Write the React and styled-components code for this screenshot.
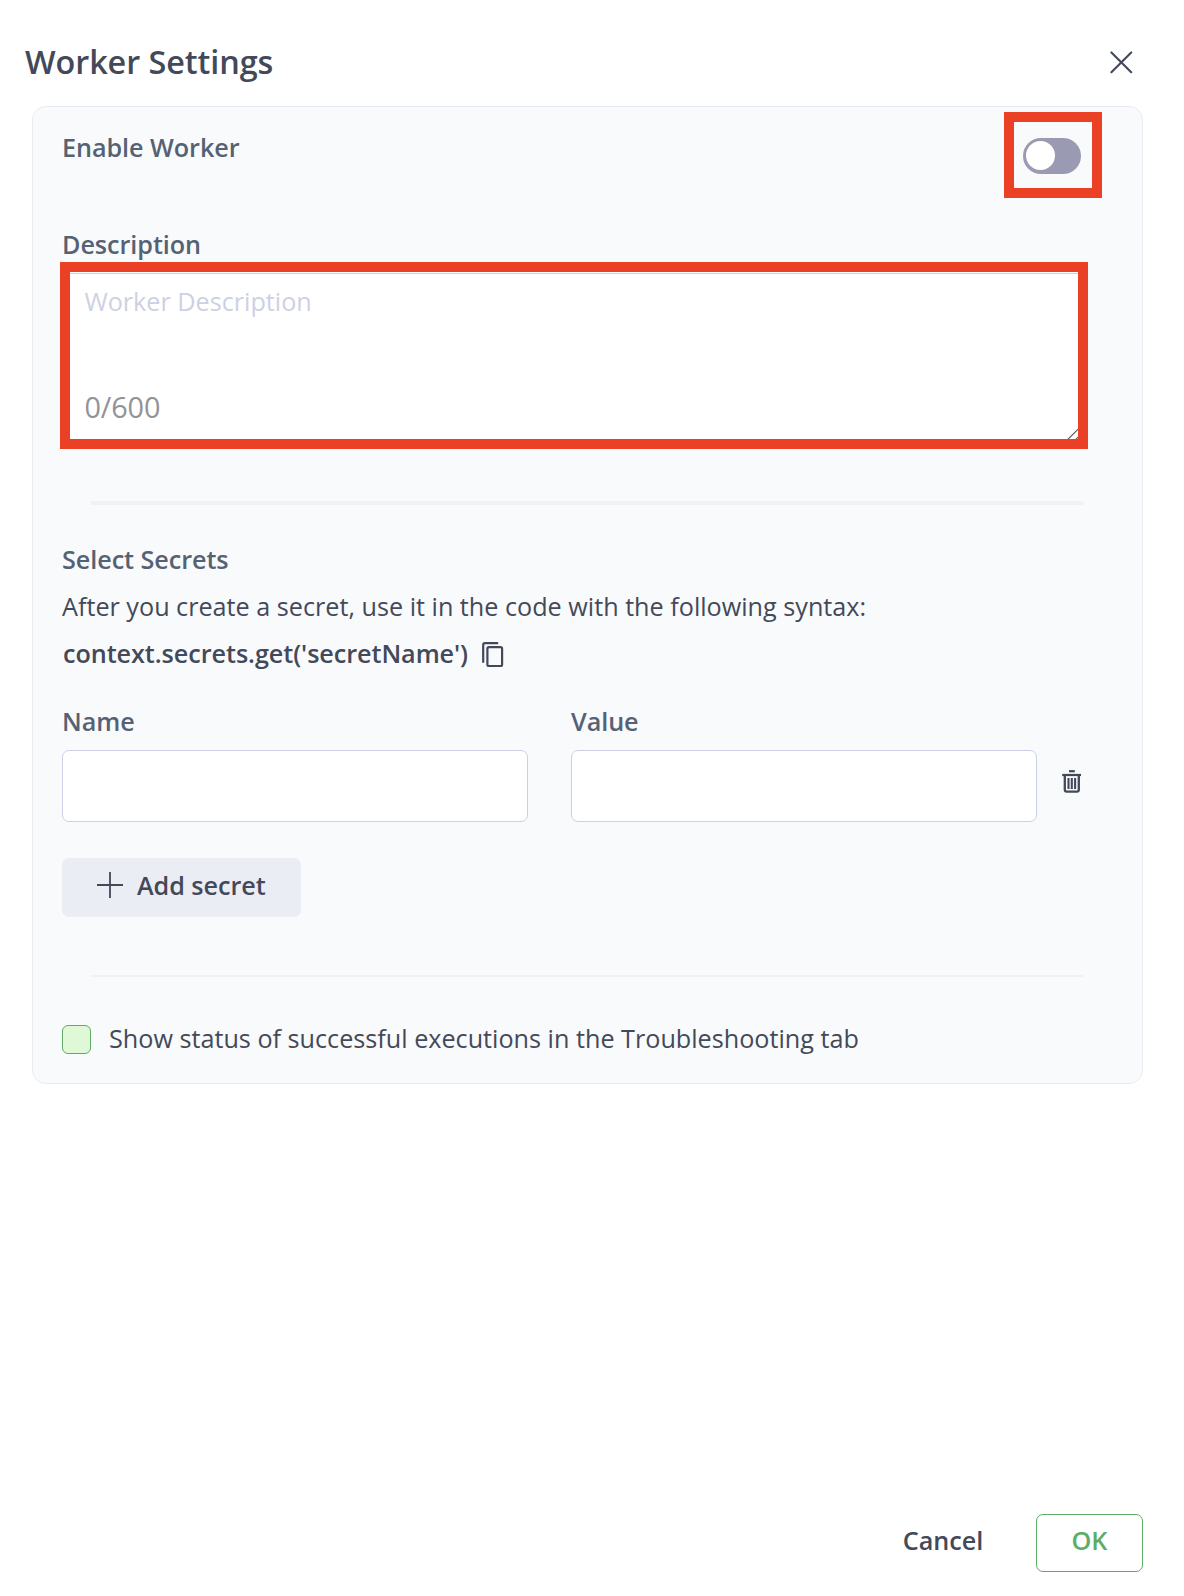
import React from "react";
import styled, { createGlobalStyle } from "styled-components";

const ink = "#434959";
const slate = "#556273";
const accent = "#ea4025";
const green = "#5bad68";

const GlobalStyle = createGlobalStyle`
  * { box-sizing: border-box; }
  body { margin: 0; background: #fff; font-family: "Open Sans", "Noto Sans", sans-serif; }
`;

const Page = styled.main`
  width: 1184px;
  height: 1596px;
  display: flex;
  flex-direction: column;
  background: #fff;
  color: ${ink};
`;

const Header = styled.header`
  height: 106px;
  padding: 39px 51px 0 25px;
  display: flex;
  justify-content: space-between;
  align-items: flex-start;
`;

const Title = styled.h1`
  margin: 0;
  font-size: 32.4px;
  line-height: 44px;
  font-weight: 600;
  letter-spacing: -0.08px;
`;

const IconButton = styled.button`
  display: flex;
  padding: 0;
  border: 0;
  background: none;
  color: ${ink};
  margin-top: ${(p) => p.$top || 0}px;
  margin-left: ${(p) => p.$left || 0}px;
`;

const Card = styled.section`
  height: 978px;
  margin: 0 41px 0 32px;
  padding: 5px 40px 0 29px;
  border: 1px solid #e9ebf3;
  border-radius: 14px;
  background: #f9fafc;
  display: flex;
  flex-direction: column;
  align-items: stretch;
`;

const Text = styled.div`
  font-size: 25.2px;
  line-height: 36px;
  white-space: nowrap;
  font-weight: ${(p) => (p.$strong ? 600 : 400)};
  letter-spacing: ${(p) => (p.$strong ? "-0.06px" : "normal")};
  color: ${(p) => p.$color || ink};
  margin-top: ${(p) => p.$top || 0}px;
`;

const EnableRow = styled.div`
  display: flex;
  justify-content: space-between;
`;

const ToggleFrame = styled.div`
  width: 98px;
  height: 86px;
  border: 10px solid ${accent};
  padding: 16px 0 0 9px;
`;

const Toggle = styled.div`
  width: 58px;
  height: 36px;
  padding: 3px;
  border-radius: 18px;
  background: #9a9bb2;
`;

const Knob = styled.div`
  width: 29px;
  height: 29px;
  border-radius: 50%;
  background: #fff;
`;

const DescriptionFrame = styled.div`
  width: 1028px;
  height: 187px;
  margin-left: -2px;
  padding-top: 1px;
  border: 10px solid ${accent};
  background: #fff;
`;

const DescriptionField = styled.div`
  position: relative;
  height: 166px;
  padding: 9px 15px 0 14.4px;
  border-top: 1px solid #ccd1e5;
`;

const Counter = styled.div`
  margin-top: 69px;
  font-size: 28.8px;
  line-height: 38px;
  letter-spacing: -0.1px;
  color: #929298;
`;

const ResizeGrip = styled.svg`
  position: absolute;
  right: 0;
  bottom: 0;
`;

const Divider = styled.div`
  width: 993px;
  height: ${(p) => p.$height}px;
  margin: ${(p) => p.$top}px 0 0 29px;
  background: #f0f2f6;
`;

const CodeRow = styled.div`
  display: flex;
  margin: 11px 0 0 1px;
`;

const SecretRow = styled.div`
  display: flex;
  align-items: flex-start;
  gap: 43px;
  margin-top: 32px;
`;

const Field = styled.label`
  width: 466px;
  display: flex;
  flex-direction: column;
`;

const Input = styled.input`
  width: 100%;
  height: 72px;
  margin-top: 11px;
  padding: 0 14px;
  border: 1px solid #ccd0e4;
  border-radius: 7px;
  background: #fff;
  font: inherit;
  font-size: 25.2px;
  outline: none;
`;

const AddButton = styled.button`
  width: 239px;
  height: 59px;
  margin-top: 36px;
  padding: 0 0 0 35px;
  border: 0;
  border-radius: 7px;
  background: #ebedf5;
  display: flex;
  align-items: flex-start;
  font-family: inherit;
`;

const CheckRow = styled.div`
  display: flex;
  align-items: flex-start;
  gap: 18px;
  margin-top: 43px;
`;

const CheckBox = styled.div`
  width: 29px;
  height: 29px;
  margin-top: 5px;
  border: 1px solid ${green};
  border-radius: 6px;
  background: #dff8d5;
`;

const Footer = styled.footer`
  margin-top: auto;
  padding: 0 41px 24px 0;
  display: flex;
  justify-content: flex-end;
`;

const FooterButton = styled.button`
  height: 58px;
  width: ${(p) => p.$width}px;
  padding: 7px 0 0;
  display: flex;
  justify-content: center;
  border: 1px solid ${(p) => p.$border || "transparent"};
  border-radius: 7px;
  background: transparent;
  font-family: inherit;
`;

function CloseIcon() {
  return (
    <svg width="23" height="23" viewBox="0 0 23 23" fill="none" stroke="currentColor" strokeWidth="2.1" strokeLinecap="round">
      <path d="M1.4 1.4 21.2 21.2M21.2 1.4 1.4 21.2" />
    </svg>
  );
}

function CopyIcon() {
  return (
    <svg width="22" height="26" viewBox="0 0 22 26" fill="none" stroke="currentColor" strokeWidth="2.2">
      <path d="M1.2 20.8V3Q1.2 1.2 3 1.2H16.2" />
      <rect x="5.4" y="5.1" width="14.7" height="18.9" rx="1.6" />
    </svg>
  );
}

function TrashIcon() {
  return (
    <svg width="20" height="24" viewBox="0 0 20 24" fill="none" stroke="currentColor">
      <path d="M7 1.2H12.8" strokeWidth="2.2" />
      <path d="M.2 5H19" strokeWidth="2.2" />
      <path d="M2.8 5V19.8Q2.8 21.7 4.7 21.7H14.9Q16.8 21.7 16.8 19.8V5" strokeWidth="2.3" />
      <path d="M6.5 8V19M9.8 8V19M13.1 8V19" strokeWidth="2.1" />
    </svg>
  );
}

const PlusSvg = styled.svg`
  flex: none;
  margin: 14px 14px 0 0;
`;

function PlusIcon() {
  return (
    <PlusSvg width="26" height="26" viewBox="0 0 26 26" fill="none" stroke={ink} strokeWidth="1.8">
      <path d="M13 0V26M0 13H26" />
    </PlusSvg>
  );
}

export default function App() {
  return (
    <>
      <GlobalStyle />
      <Page>
        <Header>
          <Title>Worker Settings</Title>
          <IconButton $top={12} aria-label="Close">
            <CloseIcon />
          </IconButton>
        </Header>

        <Card>
          <EnableRow>
            <Text $strong $color={slate} $top={17}>Enable Worker</Text>
            <ToggleFrame>
              <Toggle>
                <Knob />
              </Toggle>
            </ToggleFrame>
          </EnableRow>

          <Text $strong $color={slate} $top={28}>Description</Text>
          <DescriptionFrame>
            <DescriptionField>
              <Text $color="#cdd1e4">Worker Description</Text>
              <Counter>0/600</Counter>
              <ResizeGrip width="11" height="11" viewBox="0 0 11 11" stroke="#5c5c5c" strokeWidth="1.2">
                <path d="M.8 11.4 11.4 .8M8.8 11.4 11.4 8.8" />
              </ResizeGrip>
            </DescriptionField>
          </DescriptionFrame>

          <Divider $height={4} $top={52} />

          <Text $strong $color={slate} $top={36}>Select Secrets</Text>
          <Text $top={11}>After you create a secret, use it in the code with the following syntax:</Text>
          <CodeRow>
            <Text $strong>context.secrets.get('secretName')</Text>
            <IconButton $top={7} $left={14} aria-label="Copy">
              <CopyIcon />
            </IconButton>
          </CodeRow>

          <SecretRow>
            <Field>
              <Text $strong $color={slate}>Name</Text>
              <Input />
            </Field>
            <Field>
              <Text $strong $color={slate}>Value</Text>
              <Input />
            </Field>
            <IconButton $top={67} $left={-18} aria-label="Delete secret">
              <TrashIcon />
            </IconButton>
          </SecretRow>

          <AddButton>
            <PlusIcon />
            <Text $strong $top={9}>Add secret</Text>
          </AddButton>

          <Divider $height={2} $top={58} />

          <CheckRow>
            <CheckBox />
            <Text>Show status of successful executions in the Troubleshooting tab</Text>
          </CheckRow>
        </Card>

        <Footer>
          <FooterButton $width={186}>
            <Text $strong>Cancel</Text>
          </FooterButton>
          <FooterButton $width={107} $border={green}>
            <Text $strong $color={green}>OK</Text>
          </FooterButton>
        </Footer>
      </Page>
    </>
  );
}
